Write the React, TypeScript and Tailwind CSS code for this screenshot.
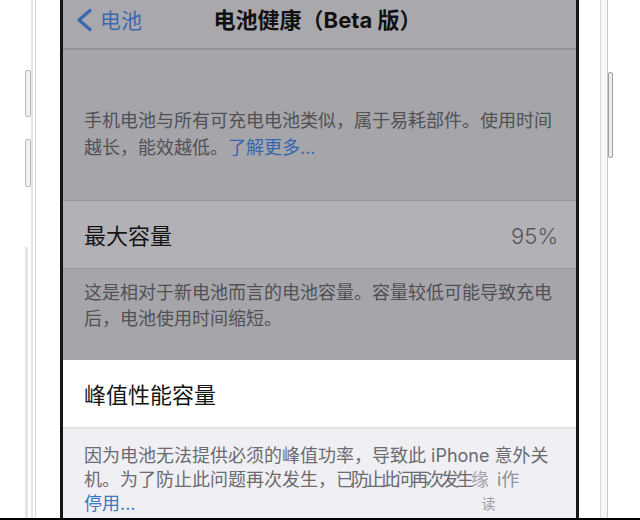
import React from 'react';

const font = "font-['Inter','Noto_Sans_CJK_SC',sans-serif]";

const LeftBezel: React.FC = () => (
  <div className="flex h-full w-[60px] bg-white">
    <div className="w-[25px]" />
    <div className="flex w-[6px] flex-col">
      <div className="mt-[70px] h-[88px] rounded-[2px] border border-[#b9b9bb] bg-[#f2f2f3]" />
      <div className="mt-[22px] h-[90px] rounded-[2px] border border-[#b9b9bb] bg-[#f2f2f3]" />
      <div className="mt-[60px] h-full w-[3px] bg-[#e4e4e6]" />
    </div>
    <div className="w-[2px] bg-[#e6e6e8]" />
    <div className="w-[2px]" />
    <div className="w-[1px] bg-[#d9d9db]" />
    <div className="flex-1" />
  </div>
);

const RightBezel: React.FC = () => (
  <div className="flex h-full flex-1 bg-white">
    <div className="w-[21px]" />
    <div className="w-[1px] bg-[#dadadc]" />
    <div className="w-[6px] bg-[#f7f7f8]" />
    <div className="w-[1px] bg-[#c9c9cb]" />
    <div className="flex w-[5px] flex-col">
      <div className="mt-[72px] h-[86px] rounded-[2px] border border-[#9f9fa2] bg-[#ededee]" />
    </div>
    <div className="flex-1" />
  </div>
);

const NavBar: React.FC = () => (
  <div className="h-[50px] border-b-2 border-[#939297] bg-[#a9a8ad]">
    <div className="relative flex h-[40px] items-center">
      <div className="flex items-center pl-[12px]">
        <svg width="18" height="24" viewBox="0 0 18 24" fill="none">
          <path d="M15 2.5 L4 12 L15 21.5" stroke="#3b69b0" strokeWidth="3.4" strokeLinecap="round" strokeLinejoin="round" />
        </svg>
        <span className="ml-[7px] text-[21px] leading-none text-[#3b69b0]">电池</span>
      </div>
      <div className="absolute inset-x-0 pr-[4px] text-center text-[22px] font-bold leading-none text-[#111]">
        电池健康（Beta 版）
      </div>
    </div>
  </div>
);

export default function App() {
  return (
    <div className={`flex h-[520px] w-[640px] overflow-hidden border-b-2 border-black bg-white ${font}`}>
      <LeftBezel />
      <div className="w-[3px] bg-[#161616]" />
      <div className="flex w-[513px] flex-col">
        <NavBar />

        {/* battery intro */}
        <div className="h-[150px] bg-[#a6a5aa] px-[21px] pt-[57px] text-[18px] leading-[27px] text-[#505055]">
          <p>手机电池与所有可充电电池类似，属于易耗部件。使用时间</p>
          <p>
            越长，能效越低。<span className="text-[#3367b1]">了解更多...</span>
          </p>
        </div>

        {/* max capacity */}
        <div className="flex h-[69px] items-center justify-between border-y border-[#98979c] bg-[#b2b1b5] pl-[21px] pr-[18px]">
          <span className="pt-[3px] text-[22px] text-[#151515]">最大容量</span>
          <span className="pt-[3px] text-[22px] font-light text-[#55555a]">95%</span>
        </div>

        <div className="h-[91px] bg-[#a6a5aa] px-[21px] pt-[11px] text-[18px] leading-[26px] text-[#505055]">
          <p>这是相对于新电池而言的电池容量。容量较低可能导致充电</p>
          <p>后，电池使用时间缩短。</p>
        </div>

        {/* peak performance */}
        <div className="flex h-[69px] items-center border-b-2 border-[#e2e2e6] bg-white pl-[21px]">
          <span className="pt-[3px] text-[22px] text-[#151515]">峰值性能容量</span>
        </div>

        <div className="flex-1 bg-[#efeff4] px-[21px] pt-[15px] text-[18px] leading-[24px] text-[#6b6b70]">
          <p className="whitespace-nowrap">因为电池无法提供必须的峰值功率，导致此 iPhone 意外关</p>
          <p className="whitespace-nowrap">
            机。为了防止此问题再次发生，
            <span className="tracking-[-3px]">已防止此问再次发生</span>
            <span className="text-[#a5a5aa] tracking-[-4px]">缘</span>
            <span className="ml-[12px] text-[#909095]">i作</span>
          </p>
          <p className="flex whitespace-nowrap">
            <span className="text-[#3a78c2]">停用...</span>
            <span className="ml-[346px] text-[14px] text-[#a0a0a5]">读</span>
          </p>
        </div>
      </div>
      <div className="w-[3px] bg-[#161616]" />
      <RightBezel />
    </div>
  );
}
